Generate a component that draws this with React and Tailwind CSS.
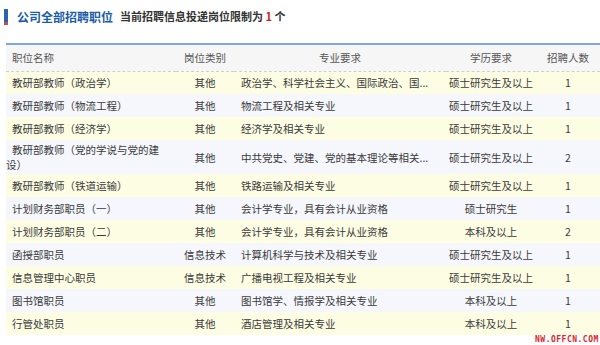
import React from 'react';

const rows = [
  { name: '教研部教师（政治学）', type: '其他', major: '政治学、科学社会主义、国际政治、国...', edu: '硕士研究生及以上', count: 1 },
  { name: '教研部教师（物流工程）', type: '其他', major: '物流工程及相关专业', edu: '硕士研究生及以上', count: 1 },
  { name: '教研部教师（经济学）', type: '其他', major: '经济学及相关专业', edu: '硕士研究生及以上', count: 1 },
  { name: '教研部教师（党的学说与党的建设）', type: '其他', major: '中共党史、党建、党的基本理论等相关...', edu: '硕士研究生及以上', count: 2 },
  { name: '教研部教师（铁道运输）', type: '其他', major: '铁路运输及相关专业', edu: '硕士研究生及以上', count: 1 },
  { name: '计划财务部职员（一）', type: '其他', major: '会计学专业，具有会计从业资格', edu: '硕士研究生', count: 1 },
  { name: '计划财务部职员（二）', type: '其他', major: '会计学专业，具有会计从业资格', edu: '本科及以上', count: 2 },
  { name: '函授部职员', type: '信息技术', major: '计算机科学与技术及相关专业', edu: '硕士研究生及以上', count: 1 },
  { name: '信息管理中心职员', type: '信息技术', major: '广播电视工程及相关专业', edu: '硕士研究生及以上', count: 1 },
  { name: '图书馆职员', type: '其他', major: '图书馆学、情报学及相关专业', edu: '本科及以上', count: 1 },
  { name: '行管处职员', type: '其他', major: '酒店管理及相关专业', edu: '本科及以上', count: 1 },
];

const App = () => {
  return (
    <div className="relative w-[600px] h-[345px] bg-white overflow-hidden font-['Noto_Sans_CJK_SC',sans-serif]">
      {/* Title */}
      <div className="flex items-center h-[34px] pl-[4px] pb-[1px]">
        <div className="w-[4px] h-[16px] bg-[#2b64ad] border-b-[3px] border-[#c0504d]" />
        <span className="ml-[9px] text-[12px] font-bold text-[#1d5ca6]">公司全部招聘职位</span>
        <span className="ml-[7px] text-[11px] font-bold text-[#333]">
          当前招聘信息投递岗位限制为 <span className="text-[#d21e1e]">1</span> 个
        </span>
      </div>

      {/* Table */}
      <div className="mt-[9px] ml-[6px] w-[594px] border-t-2 border-[#7ea6d6]">
        <table className="w-full table-fixed border-collapse text-[10.5px] leading-[15px] text-[#3a3a3a]">
          <colgroup>
            <col className="w-[170px]" />
            <col className="w-[58px]" />
            <col className="w-[212px]" />
            <col className="w-[90px]" />
            <col className="w-[64px]" />
          </colgroup>
          <thead>
            <tr className="h-[26px] bg-[#f6f6f6] border-b border-dashed border-[#d0d0d0] text-[#555]">
              <th className="font-normal text-left pl-[6px]">职位名称</th>
              <th className="font-normal text-center">岗位类别</th>
              <th className="font-normal text-center">专业要求</th>
              <th className="font-normal text-center">学历要求</th>
              <th className="font-normal text-center">招聘人数</th>
            </tr>
          </thead>
          <tbody>
            {rows.map((r, i) => (
              <tr key={i} className={`h-[23px] ${i % 2 === 0 ? 'bg-[#fdfde4]' : 'bg-[#f5f7fc]'}`}>
                <td className="py-[2px] pl-0 pr-[10px] indent-[6px]">{r.name}</td>
                <td className="py-[2px] text-center whitespace-nowrap">{r.type}</td>
                <td className="py-[2px] pl-[7px] whitespace-nowrap overflow-hidden">{r.major}</td>
                <td className="py-[2px] text-center whitespace-nowrap">{r.edu}</td>
                <td className="py-[2px] text-center">{r.count}</td>
              </tr>
            ))}
          </tbody>
        </table>
      </div>

      {/* Watermark */}
      <div className="absolute left-[535px] top-[336px] text-[8px] leading-[8px] font-bold tracking-[0.5px] text-[#d9262a] font-['DejaVu_Sans_Mono',monospace]">
        NW.OFFCN.COM
      </div>
    </div>
  );
};

export default App;
